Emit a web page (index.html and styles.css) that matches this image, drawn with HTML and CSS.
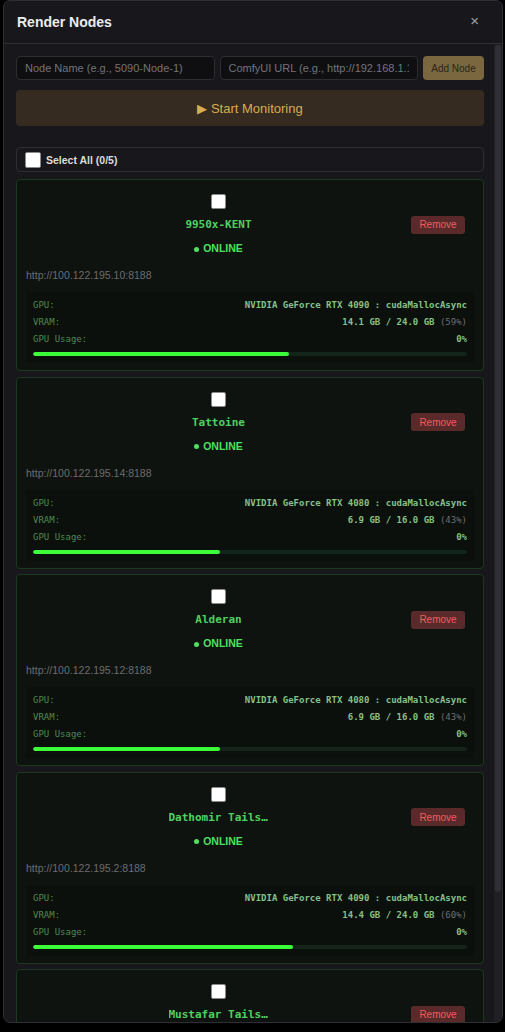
FILE: index.html
```html
<!DOCTYPE html>
<html lang="en">
<head>
<meta charset="utf-8">
<title>Render Nodes</title>
<link rel="stylesheet" href="styles.css">
</head>
<body>
<div class="modal">
  <div class="modal-header">
    <h2 class="title">Render Nodes</h2>
    <button class="close-btn" type="button">×</button>
  </div>
  <div class="modal-body">
    <div class="scroll-content">
      <div class="add-row">
        <input class="text-input" type="text" placeholder="Node Name (e.g., 5090-Node-1)">
        <input class="text-input" type="text" placeholder="ComfyUI URL (e.g., http://192.168.1.100:8188)">
        <button class="add-btn" type="button">Add Node</button>
      </div>
      <button class="start-btn" type="button">▶ Start Monitoring</button>
      <label class="select-all"><input class="check" type="checkbox"><span>Select All (0/5)</span></label>
      <div class="node-list">

        <div class="node-card">
          <div class="node-head">
            <div class="node-id">
              <input class="check node-check" type="checkbox">
              <div class="node-name">9950x-KENT</div>
              <div class="node-status"><span class="dot"></span>ONLINE</div>
            </div>
            <button class="remove-btn" type="button">Remove</button>
          </div>
          <div class="node-url">http://100.122.195.10:8188</div>
          <div class="stats">
            <div class="stat-row"><span class="label">GPU:</span><span class="value">NVIDIA GeForce RTX 4090 : cudaMallocAsync</span></div>
            <div class="stat-row"><span class="label">VRAM:</span><span class="value">14.1 GB / 24.0 GB <span class="pct">(59%)</span></span></div>
            <div class="stat-row"><span class="label">GPU Usage:</span><span class="value">0%</span></div>
            <div class="bar"><div class="bar-fill" style="width:59%"></div></div>
          </div>
        </div>

        <div class="node-card">
          <div class="node-head">
            <div class="node-id">
              <input class="check node-check" type="checkbox">
              <div class="node-name">Tattoine</div>
              <div class="node-status"><span class="dot"></span>ONLINE</div>
            </div>
            <button class="remove-btn" type="button">Remove</button>
          </div>
          <div class="node-url">http://100.122.195.14:8188</div>
          <div class="stats">
            <div class="stat-row"><span class="label">GPU:</span><span class="value">NVIDIA GeForce RTX 4080 : cudaMallocAsync</span></div>
            <div class="stat-row"><span class="label">VRAM:</span><span class="value">6.9 GB / 16.0 GB <span class="pct">(43%)</span></span></div>
            <div class="stat-row"><span class="label">GPU Usage:</span><span class="value">0%</span></div>
            <div class="bar"><div class="bar-fill" style="width:43%"></div></div>
          </div>
        </div>

        <div class="node-card">
          <div class="node-head">
            <div class="node-id">
              <input class="check node-check" type="checkbox">
              <div class="node-name">Alderan</div>
              <div class="node-status"><span class="dot"></span>ONLINE</div>
            </div>
            <button class="remove-btn" type="button">Remove</button>
          </div>
          <div class="node-url">http://100.122.195.12:8188</div>
          <div class="stats">
            <div class="stat-row"><span class="label">GPU:</span><span class="value">NVIDIA GeForce RTX 4080 : cudaMallocAsync</span></div>
            <div class="stat-row"><span class="label">VRAM:</span><span class="value">6.9 GB / 16.0 GB <span class="pct">(43%)</span></span></div>
            <div class="stat-row"><span class="label">GPU Usage:</span><span class="value">0%</span></div>
            <div class="bar"><div class="bar-fill" style="width:43%"></div></div>
          </div>
        </div>

        <div class="node-card">
          <div class="node-head">
            <div class="node-id">
              <input class="check node-check" type="checkbox">
              <div class="node-name">Dathomir Tailscale</div>
              <div class="node-status"><span class="dot"></span>ONLINE</div>
            </div>
            <button class="remove-btn" type="button">Remove</button>
          </div>
          <div class="node-url">http://100.122.195.2:8188</div>
          <div class="stats">
            <div class="stat-row"><span class="label">GPU:</span><span class="value">NVIDIA GeForce RTX 4090 : cudaMallocAsync</span></div>
            <div class="stat-row"><span class="label">VRAM:</span><span class="value">14.4 GB / 24.0 GB <span class="pct">(60%)</span></span></div>
            <div class="stat-row"><span class="label">GPU Usage:</span><span class="value">0%</span></div>
            <div class="bar"><div class="bar-fill" style="width:60%"></div></div>
          </div>
        </div>

        <div class="node-card">
          <div class="node-head">
            <div class="node-id">
              <input class="check node-check" type="checkbox">
              <div class="node-name">Mustafar Tailscale</div>
              <div class="node-status"><span class="dot"></span>ONLINE</div>
            </div>
            <button class="remove-btn" type="button">Remove</button>
          </div>
          <div class="node-url">http://100.122.195.3:8188</div>
          <div class="stats">
            <div class="stat-row"><span class="label">GPU:</span><span class="value">NVIDIA GeForce RTX 4090 : cudaMallocAsync</span></div>
            <div class="stat-row"><span class="label">VRAM:</span><span class="value">14.4 GB / 24.0 GB <span class="pct">(60%)</span></span></div>
            <div class="stat-row"><span class="label">GPU Usage:</span><span class="value">0%</span></div>
            <div class="bar"><div class="bar-fill" style="width:60%"></div></div>
          </div>
        </div>

      </div>
    </div>
    <div class="scrollbar"><div class="scroll-thumb"></div></div>
  </div>
</div>
</body>
</html>
```
FILE: styles.css
```css
* { box-sizing: border-box; }

html, body {
  margin: 0;
  padding: 0;
  background: #000;
  font-family: "Liberation Sans", Arial, sans-serif;
}

.modal {
  margin-left: 3px;
  width: 500px;
  height: 1023px;
  background: #18181c;
  border: 1px solid #2e2e34;
  border-radius: 7px;
  display: flex;
  flex-direction: column;
  overflow: hidden;
}

.modal-header {
  height: 43px;
  flex: none;
  display: flex;
  align-items: center;
  justify-content: space-between;
  padding: 0 23px 0 13px;
  border-bottom: 1px solid #2e2e34;
}

.title {
  margin: 0;
  font-size: 14px;
  font-weight: bold;
  color: #ececec;
}

.close-btn {
  background: none;
  border: none;
  padding: 0;
  color: #a0a0a6;
  font-size: 15px;
  font-family: "Liberation Sans", Arial, sans-serif;
  line-height: 1;
  margin-top: -3px;
}

.modal-body {
  flex: 1;
  min-height: 0;
  display: flex;
}

.scroll-content {
  flex: 1;
  min-width: 0;
  overflow: hidden;
  padding: 12px 10px 12px 12px;
}

.scrollbar {
  flex: none;
  width: 8px;
  background: #1f1f24;
  padding: 1px 1px 0 1px;
}

.scroll-thumb {
  height: 847px;
  background: #2f2f35;
  border-radius: 3px;
}

.add-row {
  display: flex;
  gap: 5px;
  height: 24px;
}

.text-input {
  flex: 1;
  min-width: 0;
  height: 24px;
  background: #0f0f12;
  border: 1px solid #2c2c32;
  border-radius: 4px;
  padding: 0 8px;
  color: #ddd;
  font-family: "Liberation Sans", Arial, sans-serif;
  font-size: 11px;
}
.text-input::placeholder { color: #73737a; }

.add-btn {
  flex: none;
  width: 61px;
  height: 24px;
  border: none;
  border-radius: 4px;
  background: #7a6740;
  color: #2b2518;
  font-family: "Liberation Sans", Arial, sans-serif;
  font-size: 10px;
  padding: 0;
}

.start-btn {
  display: block;
  width: 100%;
  height: 36px;
  margin-top: 10px;
  border: none;
  border-radius: 4px;
  background: #352b21;
  color: #d8ad52;
  font-family: "Liberation Sans", Arial, sans-serif;
  font-size: 13px;
}

.select-all {
  margin-top: 21px;
  height: 25px;
  display: flex;
  align-items: center;
  gap: 5px;
  padding: 0 8px;
  border: 1px solid #2d2d33;
  border-radius: 4px;
  font-size: 10.5px;
  font-weight: bold;
  color: #dcdcdc;
}

.check {
  appearance: none;
  -webkit-appearance: none;
  margin: 0;
  width: 16px;
  height: 16px;
  background: #fff;
  border: 1px solid #8a8a8a;
  border-radius: 2px;
  flex: none;
}

.node-list {
  margin-top: 7px;
  display: flex;
  flex-direction: column;
  gap: 5.5px;
}

.node-card {
  flex: none;
  background: #0e130f;
  border: 1px solid #1b3820;
  border-radius: 4px;
  padding: 9px 9px 7px;
}

.node-head {
  display: flex;
  align-items: center;
  padding-right: 9px;
}

.node-id {
  flex: 1;
  display: flex;
  flex-direction: column;
  align-items: center;
  padding: 5px 0 5px;
}

.node-check {
  width: 15px;
  height: 15px;
}

.node-name {
  margin-top: 9px;
  line-height: 14px;
  max-width: 100px;
  white-space: nowrap;
  overflow: hidden;
  text-overflow: ellipsis;
  font-family: "DejaVu Sans Mono", "Liberation Mono", monospace;
  font-size: 11px;
  font-weight: bold;
  color: #50cf60;
}

.node-status {
  margin-top: 9px;
  line-height: 14px;
  display: flex;
  align-items: center;
  gap: 4px;
  font-size: 10.5px;
  font-weight: bold;
  color: #4ee05e;
}

.dot {
  width: 5px;
  height: 5px;
  border-radius: 50%;
  background: #4ee05e;
  margin-top: 2px;
}

.remove-btn {
  flex: none;
  width: 54px;
  height: 18px;
  border: none;
  border-radius: 3px;
  background: #5a2a2b;
  color: #ec5e60;
  font-family: "Liberation Sans", Arial, sans-serif;
  font-size: 10px;
  padding: 0;
}

.node-url {
  margin-top: 8px;
  line-height: 14px;
  font-size: 10.5px;
  color: #6c6c70;
}

.stats {
  margin-top: 10px;
  background: #0b100c;
  border-radius: 3px;
  padding: 7px 7px 7px;
  font-family: "DejaVu Sans Mono", "Liberation Mono", monospace;
  font-size: 9px;
}

.stat-row {
  display: flex;
  justify-content: space-between;
  line-height: 12px;
  margin-bottom: 5px;
}

.label { color: #4c8a4f; }

.value {
  color: #86c088;
  font-weight: bold;
}

.pct {
  color: #6e6e72;
  font-weight: normal;
}

.bar {
  margin-top: 7px;
  height: 4px;
  background: #13241a;
  border-radius: 2px;
  overflow: hidden;
}

.bar-fill {
  height: 100%;
  background: #3cff3a;
  border-radius: 2px;
}
```
